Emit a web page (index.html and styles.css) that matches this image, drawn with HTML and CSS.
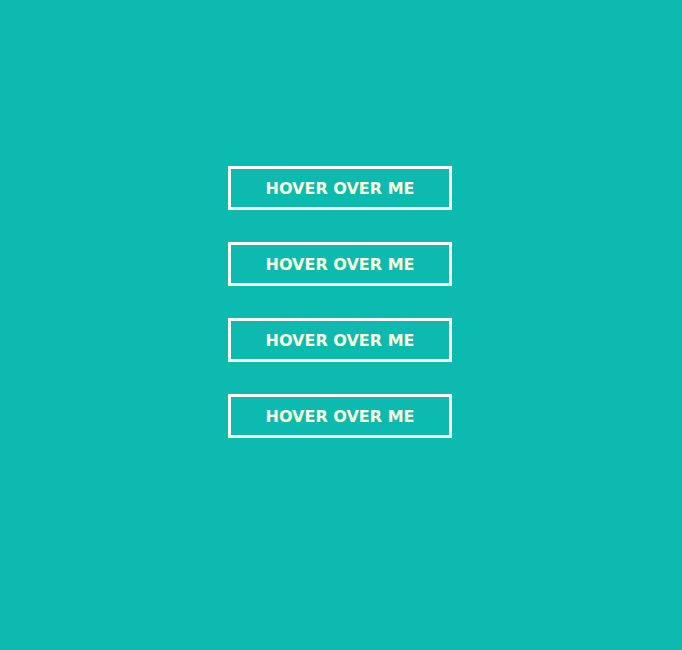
FILE: index.html
```html
<!DOCTYPE html>
<html>
<head>
<meta charset="utf-8">
<link rel="stylesheet" href="styles.css">
</head>
<body>
<div class="stack">
  <button class="btn">HOVER OVER ME</button>
  <button class="btn">HOVER OVER ME</button>
  <button class="btn">HOVER OVER ME</button>
  <button class="btn">HOVER OVER ME</button>
</div>
</body>
</html>
```
FILE: styles.css
```css
html, body {
  margin: 0;
  padding: 0;
  background: #0cbaaf;
  height: 100%;
}
.stack {
  display: flex;
  flex-direction: column;
  align-items: center;
  gap: 32px;
  padding-top: 166px;
  padding-right: 2px;
}
.btn {
  box-sizing: border-box;
  width: 224px;
  height: 44px;
  border: 3px solid #fdfdf4;
  background: transparent;
  color: #fbfbdc;
  font-family: "DejaVu Sans", Verdana, sans-serif;
  font-weight: bold;
  font-size: 16px;
  padding: 1px 0 0 0;
  display: flex;
  align-items: center;
  justify-content: center;
}
```
